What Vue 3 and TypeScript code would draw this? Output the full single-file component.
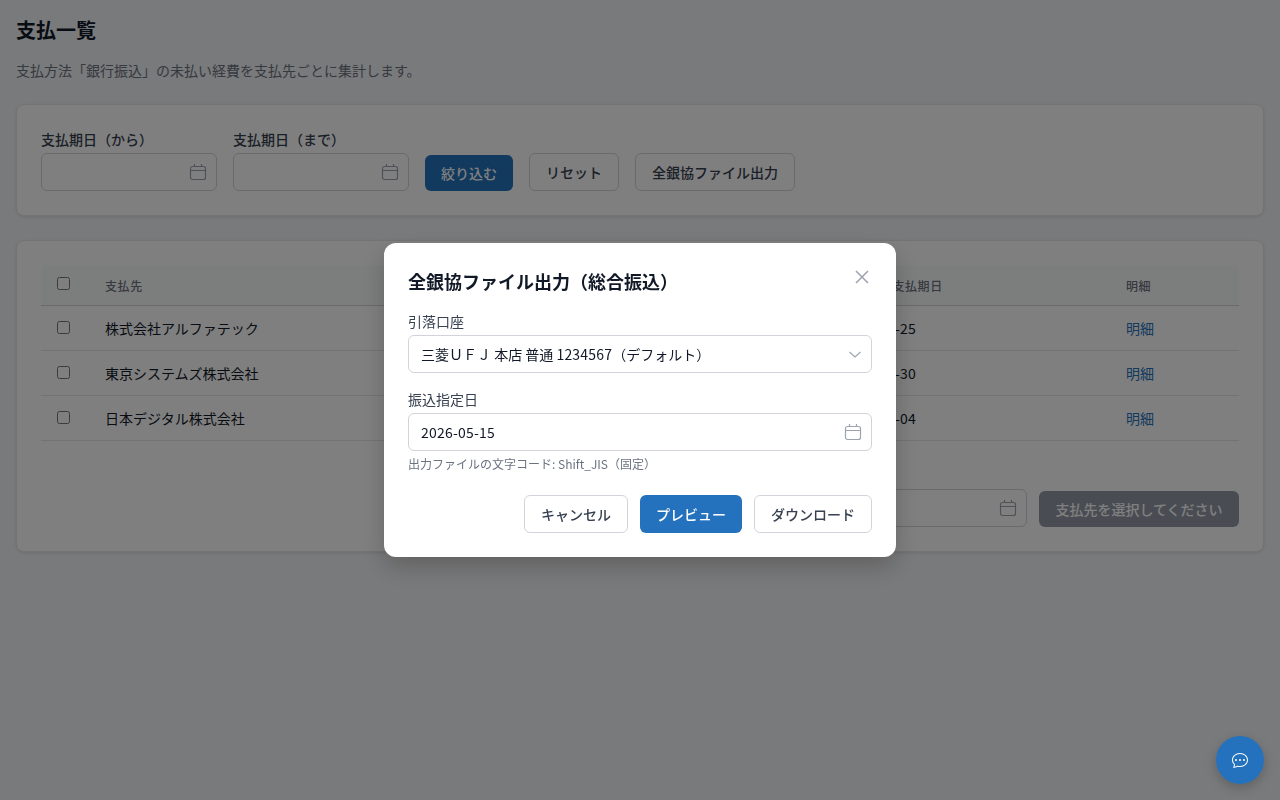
<script setup lang="ts">
interface Payee {
  id: number;
  name: string;
  dueDate: string;
}

const payees: Payee[] = [
  { id: 1, name: "株式会社アルファテック", dueDate: "2026-04-25" },
  { id: 2, name: "東京システムズ株式会社", dueDate: "2026-04-30" },
  { id: 3, name: "日本デジタル株式会社", dueDate: "2026-05-04" },
];

const filterLabels = ["支払期日（から）", "支払期日（まで）"];
</script>

<template>
  <div class="page">
    <h1 class="title">支払一覧</h1>
    <p class="desc">支払方法「銀行振込」の未払い経費を支払先ごとに集計します。</p>

    <section class="card filter">
      <div v-for="label in filterLabels" :key="label" class="field">
        <label class="field-label">{{ label }}</label>
        <div class="input">
          <svg class="cal" viewBox="0 0 18 18" width="18" height="18">
            <rect x="1.5" y="3.5" width="15" height="13" rx="2" />
            <path d="M1.5 7.5h15M5.5 1v3M12.5 1v3" />
          </svg>
        </div>
      </div>
      <button class="btn primary">絞り込む</button>
      <button class="btn outline">リセット</button>
      <button class="btn outline">全銀協ファイル出力</button>
    </section>

    <section class="card list">
      <table>
        <colgroup>
          <col class="col-check" />
          <col class="col-name" />
          <col class="col-date" />
          <col />
        </colgroup>
        <thead>
          <tr>
            <th class="check"><input type="checkbox" /></th>
            <th>支払先</th>
            <th>最も早い支払期日</th>
            <th>明細</th>
          </tr>
        </thead>
        <tbody>
          <tr v-for="payee in payees" :key="payee.id">
            <td class="check"><input type="checkbox" /></td>
            <td>{{ payee.name }}</td>
            <td class="num">{{ payee.dueDate }}</td>
            <td><a class="link">明細</a></td>
          </tr>
        </tbody>
      </table>
      <div class="list-footer">
        <div class="input">
          <svg class="cal" viewBox="0 0 18 18" width="18" height="18">
            <rect x="1.5" y="3.5" width="15" height="13" rx="2" />
            <path d="M1.5 7.5h15M5.5 1v3M12.5 1v3" />
          </svg>
        </div>
        <button class="btn disabled">支払先を選択してください</button>
      </div>
    </section>
  </div>

  <div class="overlay">
    <div class="modal">
      <div class="modal-head">
        <h2 class="modal-title">全銀協ファイル出力（総合振込）</h2>
        <svg class="close" viewBox="0 0 14 14" width="14" height="14">
          <path d="M1 1l12 12M13 1L1 13" />
        </svg>
      </div>

      <label class="modal-label">引落口座</label>
      <div class="input modal-input">
        <span>三菱ＵＦＪ 本店 普通 <span class="num">1234567</span>（デフォルト）</span>
        <svg class="chevron" viewBox="0 0 12 7" width="12" height="7">
          <path d="M.5 1L6 6l5.5-5" />
        </svg>
      </div>

      <label class="modal-label second">振込指定日</label>
      <div class="input modal-input">
        <span class="num">2026-05-15</span>
        <svg class="cal" viewBox="0 0 18 18" width="18" height="18">
          <rect x="1.5" y="3.5" width="15" height="13" rx="2" />
          <path d="M1.5 7.5h15M5.5 1v3M12.5 1v3" />
        </svg>
      </div>
      <p class="hint">出力ファイルの文字コード: Shift_JIS（固定）</p>

      <div class="modal-actions">
        <button class="btn outline">キャンセル</button>
        <button class="btn primary tall">プレビュー</button>
        <button class="btn outline">ダウンロード</button>
      </div>
    </div>
  </div>

  <button class="fab">
    <svg viewBox="0 0 16 16" width="16" height="16" fill="currentColor">
      <path d="M5 8a1 1 0 1 1-2 0 1 1 0 0 1 2 0zm4 0a1 1 0 1 1-2 0 1 1 0 0 1 2 0zm3 1a1 1 0 1 0 0-2 1 1 0 0 0 0 2z" />
      <path d="M2.165 15.803l.02-.004c1.83-.363 2.948-.842 3.468-1.105A9.06 9.06 0 0 0 8 15c4.418 0 8-3.134 8-7s-3.582-7-8-7-8 3.134-8 7c0 1.76.743 3.37 1.97 4.6a10.437 10.437 0 0 1-.524 2.318l-.003.011a10.722 10.722 0 0 1-.244.637c-.079.186.074.394.273.362a21.673 21.673 0 0 0 .693-.125zm.8-3.108a1 1 0 0 0-.287-.801C1.618 10.83 1 9.468 1 8c0-3.192 3.004-6 7-6s7 2.808 7 6c0 3.193-3.004 6-7 6a8.06 8.06 0 0 1-2.088-.272 1 1 0 0 0-.711.074c-.387.196-1.24.57-2.634.893a10.97 10.97 0 0 0 .398-2z" />
    </svg>
  </button>
</template>

<style>
html,
body {
  background: #f3f4f6;
}
body {
  font-family: "Noto Sans CJK JP", "Noto Sans", sans-serif;
}
</style>

<style scoped>
.page {
  padding: 16px;
  color: #111827;
  font-size: 14px;
}

.title {
  margin: 0;
  font-size: 20px;
  line-height: 28px;
  font-weight: 700;
}

.desc {
  margin: 16px 0 24px;
  line-height: 20px;
  color: #6b7280;
}

.card {
  background: #fff;
  border: 1px solid #e5e7eb;
  border-radius: 8px;
  box-shadow: 0 1px 3px rgba(0, 0, 0, 0.1);
  padding: 24px;
}

.filter {
  display: flex;
  align-items: flex-end;
  gap: 16px;
  margin-bottom: 24px;
}

.field {
  display: flex;
  flex-direction: column;
}

.field-label {
  line-height: 20px;
  font-weight: 500;
  color: #374151;
  margin-bottom: 4px;
}

.input {
  box-sizing: border-box;
  height: 38px;
  width: 176px;
  border: 1px solid #d1d5db;
  border-radius: 6px;
  background: #fff;
  display: flex;
  align-items: center;
  justify-content: flex-end;
  padding: 0 9px 0 12px;
}

.num {
  letter-spacing: 0.2px;
}

.cal {
  fill: none;
  stroke: #9ca3af;
  stroke-width: 1.2;
}

.btn {
  box-sizing: border-box;
  font-family: inherit;
  font-size: 14px;
  font-weight: 500;
  height: 38px;
  padding: 0 16px;
  border-radius: 6px;
  white-space: nowrap;
}

.primary {
  height: 36px;
  background: #2472bd;
  color: #fff;
  border: none;
}

.primary.tall {
  height: 38px;
}

.outline {
  background: #fff;
  color: #374151;
  border: 1px solid #d1d5db;
}

.disabled {
  height: 36px;
  width: 200px;
  background: #929aa6;
  color: #fff;
  border: none;
}

.list {
  height: 312px;
  box-sizing: border-box;
  display: flex;
  flex-direction: column;
}

table {
  border-collapse: collapse;
  table-layout: fixed;
  width: 100%;
}

.col-check {
  width: 48px;
}
.col-name {
  width: 737px;
}
.col-date {
  width: 284px;
}

th {
  background: #f9fafb;
  height: 40px;
  padding: 0 16px;
  text-align: left;
  font-size: 12px;
  font-weight: 500;
  letter-spacing: 0.6px;
  color: #6b7280;
  border-bottom: 1px solid #d1d5db;
}

td {
  height: 44px;
  padding: 0 16px;
  border-bottom: 1px solid #e5e7eb;
}

th.check {
  height: 36px;
  padding-bottom: 4px;
}

td.check {
  height: 42px;
  padding-bottom: 2px;
}

input[type="checkbox"] {
  margin: 0;
  display: block;
}

.link {
  color: #2472bd;
}

.list-footer {
  margin-top: auto;
  display: flex;
  justify-content: flex-end;
  align-items: flex-end;
  gap: 12px;
}

.overlay {
  position: fixed;
  inset: 0;
  background: rgba(0, 0, 0, 0.5);
  display: flex;
  align-items: center;
  justify-content: center;
}

.modal {
  box-sizing: border-box;
  width: 512px;
  height: 314px;
  padding: 24px;
  background: #fff;
  border-radius: 12px;
  box-shadow: 0 10px 25px rgba(0, 0, 0, 0.2);
  color: #111827;
  font-size: 14px;
}

.modal-head {
  display: flex;
  justify-content: space-between;
  align-items: flex-start;
  margin-bottom: 18px;
}

.modal-title {
  margin: 2px 0 0;
  font-size: 18px;
  line-height: 24px;
  font-weight: 700;
}

.close {
  fill: none;
  stroke: #9ca3af;
  stroke-width: 1.5;
  margin: 3px 3px 0 0;
}

.modal-label {
  display: block;
  line-height: 20px;
  color: #374151;
  font-weight: 400;
  margin-bottom: 4px;
}

.modal-label.second {
  margin-top: 16px;
}

.modal-input {
  width: 100%;
  justify-content: space-between;
}

.chevron {
  fill: none;
  stroke: #9ca3af;
  stroke-width: 1.1;
  margin-right: 1px;
}

.hint {
  margin: 4px 0 0;
  font-size: 12px;
  line-height: 18px;
  color: #6b7280;
}

.modal-actions {
  display: flex;
  justify-content: flex-end;
  gap: 12px;
  margin-top: 22px;
}

.fab {
  position: fixed;
  right: 16px;
  bottom: 16px;
  width: 48px;
  height: 48px;
  border: none;
  border-radius: 50%;
  background: #2472bd;
  color: #fff;
  display: flex;
  align-items: center;
  justify-content: center;
  box-shadow: 0 4px 12px rgba(0, 0, 0, 0.2);
}
</style>
